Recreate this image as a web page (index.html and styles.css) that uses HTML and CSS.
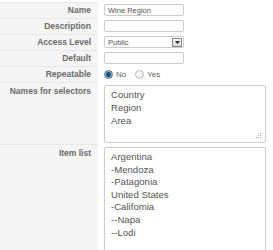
FILE: index.html
```html
<!DOCTYPE html>
<html>
<head>
  <title>Field Settings</title>
  <link rel="stylesheet" href="styles.css">
</head>
<body>
  <div class="form">
    <div class="row">
      <label class="label">Name</label>
      <div class="value"><input type="text" class="text-input" value="Wine Region"></div>
    </div>
    <div class="row">
      <label class="label">Description</label>
      <div class="value"><input type="text" class="text-input"></div>
    </div>
    <div class="row">
      <label class="label">Access Level</label>
      <div class="value">
        <div class="select">
          <span>Public</span>
          <span class="select-btn">
            <svg width="5" height="3" viewBox="0 0 5 3"><path d="M0 0h5L2.5 3z" fill="#222"/></svg>
          </span>
        </div>
      </div>
    </div>
    <div class="row">
      <label class="label">Default</label>
      <div class="value"><input type="text" class="text-input"></div>
    </div>
    <div class="row">
      <label class="label">Repeatable</label>
      <div class="value radios">
        <span class="radio-opt"><span class="radio checked"></span>No</span>
        <span class="radio-opt"><span class="radio"></span>Yes</span>
      </div>
    </div>
    <div class="row tall">
      <label class="label">Names for selectors</label>
      <div class="value">
        <div class="area short">Country<br>Region<br>Area
          <svg class="grip" width="6" height="6" viewBox="0 0 6 6">
            <rect x="4" y="0" width="1" height="1"/>
            <rect x="2" y="2" width="1" height="1"/><rect x="4" y="2" width="1" height="1"/>
            <rect x="0" y="4" width="1" height="1"/><rect x="2" y="4" width="1" height="1"/><rect x="4" y="4" width="1" height="1"/>
          </svg>
        </div>
      </div>
    </div>
    <div class="row tall last">
      <label class="label">Item list</label>
      <div class="value">
        <div class="area long">Argentina<br>-Mendoza<br>-Patagonia<br>United States<br>-Califomia<br>--Napa<br>--Lodi</div>
      </div>
    </div>
  </div>
</body>
</html>
```

FILE: styles.css
```css
body {
  margin: 0;
  padding: 0;
  background: #fff;
  font-family: "Liberation Sans", Arial, sans-serif;
  overflow: hidden;
}

.form {
  padding-top: 2px;
}

.row {
  display: grid;
  grid-template-columns: 98px 1fr;
  height: 16px;
}

.row.tall {
  height: 62px;
}

.row.last {
  height: 110px;
}

.label {
  background: #f5f5f5;
  border-top: 1px solid #e8e8e8;
  color: #6a6a6a;
  font-size: 8.5px;
  font-weight: 700;
  text-align: right;
  padding-right: 7px;
  line-height: 15px;
}

.tall .label {
  padding-top: 1px;
}

.value {
  display: flex;
  align-items: center;
  padding-left: 6px;
}

.tall .value {
  align-items: flex-start;
  padding-top: 3px;
}

.text-input {
  box-sizing: border-box;
  width: 80px;
  height: 12px;
  margin: 0;
  padding: 0 3px;
  border: 1px solid #ccc;
  border-radius: 2px;
  font-family: inherit;
  font-size: 7.5px;
  color: #555;
  outline: none;
}

.select {
  box-sizing: border-box;
  display: flex;
  align-items: center;
  justify-content: space-between;
  width: 80px;
  height: 12px;
  border: 1px solid #ccc;
  border-radius: 2px;
  padding: 0 1px 0 3px;
  font-size: 7.5px;
  color: #555;
}

.select-btn {
  box-sizing: border-box;
  display: flex;
  align-items: center;
  justify-content: center;
  width: 10px;
  height: 9px;
  border: 1px solid #888;
  background: linear-gradient(#fafafa, #d4d4d4);
}

.radios {
  gap: 9px;
  font-size: 8px;
  color: #666;
}

.radio-opt {
  display: flex;
  align-items: center;
  gap: 3px;
}

.radio {
  box-sizing: border-box;
  width: 9px;
  height: 9px;
  border-radius: 50%;
  border: 1px solid #bbb;
  background: radial-gradient(circle at 40% 35%, #fff, #ddd);
}

.radio.checked {
  border-color: #5b7a99;
  background: radial-gradient(circle, #1f4e79 0 2px, #8fb0d0 3px);
}

.area {
  position: relative;
  box-sizing: border-box;
  width: 162px;
  border: 1px solid #ccc;
  border-radius: 2px;
  padding: 3px 6px;
  font-size: 9.6px;
  line-height: 12.8px;
  color: #555;
}

.area.short {
  height: 58px;
}

.area.long {
  height: 110px;
  padding-top: 3px;
  line-height: 12.6px;
}

.grip {
  position: absolute;
  right: 3px;
  bottom: 3px;
  fill: #aaa;
}
```
